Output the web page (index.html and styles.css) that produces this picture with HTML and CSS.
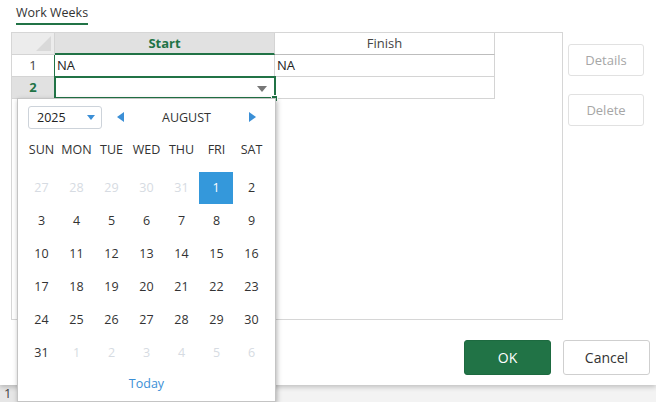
FILE: index.html
```html
<!DOCTYPE html>
<html>
<head>
    <title>Work Weeks</title>
    <meta charset="UTF-8" />
    <link rel="stylesheet" href="styles.css">
</head>
<body>
    <div class="dialog">
        <div class="tabs">
            <span class="tab active">Work Weeks</span>
        </div>
        <div class="content">
            <div class="panel">
                <div class="grid">
                    <div class="cell corner"><span class="cornerMark"></span></div>
                    <div class="cell colHead selected">Start</div>
                    <div class="cell colHead">Finish</div>

                    <div class="cell rowHead">1</div>
                    <div class="cell data startCol">NA</div>
                    <div class="cell data">NA</div>

                    <div class="cell rowHead selected">2</div>
                    <div class="cell data startCol active">
                        <span class="dropArrow"></span>
                        <span class="fillHandle"></span>
                    </div>
                    <div class="cell data"></div>
                </div>
            </div>
            <div class="side">
                <button class="sideButton" disabled>Details</button>
                <button class="sideButton" disabled>Delete</button>
            </div>
        </div>
        <div class="footer">
            <button class="button primary">OK</button>
            <button class="button">Cancel</button>
        </div>
    </div>

    <div class="sheet">
        <div class="sheetHead">1</div>
        <div class="sheetCol"></div>
        <div class="sheetCol"></div>
        <div class="sheetCol"></div>
    </div>

    <div class="calendar">
        <div class="calHeader">
            <div class="yearSelect">2025<span class="selectArrow"></span></div>
            <span class="navArrow prev"></span>
            <span class="monthName">AUGUST</span>
            <span class="navArrow next"></span>
        </div>
        <div class="weekDays">
            <span>SUN</span><span>MON</span><span>TUE</span><span>WED</span><span>THU</span><span>FRI</span><span>SAT</span>
        </div>
        <div class="days">
            <span class="other">27</span><span class="other">28</span><span class="other">29</span><span class="other">30</span><span class="other">31</span><span class="picked">1</span><span>2</span>
            <span>3</span><span>4</span><span>5</span><span>6</span><span>7</span><span>8</span><span>9</span>
            <span>10</span><span>11</span><span>12</span><span>13</span><span>14</span><span>15</span><span>16</span>
            <span>17</span><span>18</span><span>19</span><span>20</span><span>21</span><span>22</span><span>23</span>
            <span>24</span><span>25</span><span>26</span><span>27</span><span>28</span><span>29</span><span>30</span>
            <span>31</span><span class="other">1</span><span class="other">2</span><span class="other">3</span><span class="other">4</span><span class="other">5</span><span class="other">6</span>
        </div>
        <div class="today">Today</div>
    </div>
</body>
</html>
```

FILE: styles.css
```css
body
{
    margin: 0;
    font-family: "Open Sans", "Noto Sans", sans-serif;
    font-size: 13px;
    color: #333;
    background-color: #f3f3f3;
    overflow: hidden;
}

.dialog
{
    position: relative;
    z-index: 1;
    height: 385px;
    background-color: #fff;
    box-shadow: 0 2px 5px rgba(0, 0, 0, 0.22);
}

.tabs
{
    height: 32px;
    padding: 3px 0 0 16px;
    box-sizing: border-box;
}

.tab
{
    display: inline-block;
    font-size: 12.5px;
    line-height: 17px;
    padding-bottom: 2px;
    color: #333;
    border-bottom: 2px solid #217346;
}

.content
{
    display: flex;
    gap: 5px;
    padding-left: 11px;
}

.panel
{
    width: 552px;
    height: 288px;
    box-sizing: border-box;
    border: 1px solid #d6d6d6;
}

.grid
{
    display: grid;
    grid-template-columns: 43px 220px 220px;
    grid-template-rows: 22px 22px 22px;
}

.cell
{
    position: relative;
    box-sizing: border-box;
    border-right: 1px solid #d4d4d4;
    border-bottom: 1px solid #d4d4d4;
    line-height: 21px;
    white-space: nowrap;
}

.corner
{
    background-color: #ececec;
}

.cornerMark
{
    position: absolute;
    right: 3px;
    bottom: 3px;
    width: 0;
    height: 0;
    border-left: 15px solid transparent;
    border-bottom: 15px solid #d9d9d9;
}

.colHead
{
    text-align: center;
    color: #444;
    background-color: #fff;
    border-bottom-color: #bdbdbd;
}

.colHead.selected
{
    color: #217346;
    font-weight: bold;
    background-color: #e1e1e1;
    border-bottom: 2px solid #217346;
    line-height: 20px;
}

.rowHead
{
    text-align: center;
    color: #444;
}

.rowHead.selected
{
    color: #217346;
    font-weight: bold;
    background-color: #e1e1e1;
}

.data
{
    padding-left: 2px;
    color: #222;
}

.data.startCol
{
    border-left: 1px solid #217346;
    margin-left: -1px;
}

.data.active::after
{
    content: "";
    position: absolute;
    left: -1px;
    top: -1px;
    right: -2px;
    bottom: -1px;
    border: 2px solid #217346;
}

.dropArrow
{
    position: absolute;
    right: 7px;
    top: 9px;
    width: 0;
    height: 0;
    border-left: 5px solid transparent;
    border-right: 5px solid transparent;
    border-top: 6px solid #777;
}

.fillHandle
{
    position: absolute;
    z-index: 2;
    right: -4px;
    bottom: -4px;
    width: 5px;
    height: 5px;
    background-color: #217346;
    border: 1px solid #fff;
}

.side
{
    display: flex;
    flex-direction: column;
    gap: 18px;
    padding-top: 12px;
}

.sideButton
{
    width: 76px;
    height: 32px;
    font-family: inherit;
    font-size: 13px;
    color: #a6a6a6;
    background-color: #fff;
    border: 1px solid #e1e1e1;
    border-radius: 3px;
}

.footer
{
    display: flex;
    justify-content: flex-end;
    gap: 12px;
    padding: 20px 6px 0 0;
}

.button
{
    width: 87px;
    height: 35px;
    font-family: inherit;
    font-size: 14px;
    color: #333;
    background-color: #fff;
    border: 1px solid #cfcfcf;
    border-radius: 3px;
}

.button.primary
{
    color: #fff;
    background-color: #217346;
    border-color: #1d6a40;
}

.sheet
{
    display: flex;
    height: 17px;
}

.sheetHead
{
    width: 13px;
    padding-left: 4px;
    background-color: #e6e6e6;
    color: #444;
    line-height: 17px;
}

.sheetCol
{
    width: 41px;
    border-right: 1px solid #e3e3e3;
}

.sheetCol:first-of-type
{
    margin-left: 215px;
}

.calendar
{
    position: absolute;
    z-index: 3;
    left: 17px;
    top: 98px;
    width: 259px;
    height: 304px;
    box-sizing: border-box;
    background-color: #fff;
    border: 1px solid #c4c4c4;
    box-shadow: 1px 2px 5px rgba(0, 0, 0, 0.3);
}

.calHeader
{
    display: flex;
    align-items: center;
    height: 24px;
    padding: 6px 0 0 10px;
}

.yearSelect
{
    position: relative;
    width: 74px;
    height: 23px;
    box-sizing: border-box;
    padding-left: 8px;
    line-height: 21px;
    font-size: 12.5px;
    color: #222;
    border: 1px solid #cdd3da;
    border-radius: 3px;
}

.selectArrow
{
    position: absolute;
    right: 6px;
    top: 8px;
    width: 0;
    height: 0;
    border-left: 4px solid transparent;
    border-right: 4px solid transparent;
    border-top: 5px solid #3b8fd6;
}

.navArrow
{
    width: 0;
    height: 0;
    border-top: 5px solid transparent;
    border-bottom: 5px solid transparent;
}

.navArrow.prev
{
    margin-left: 15px;
    border-right: 7px solid #3b8fd6;
}

.navArrow.next
{
    border-left: 7px solid #3b8fd6;
}

.monthName
{
    width: 125px;
    text-align: center;
    font-size: 12.5px;
    color: #333;
}

.weekDays,
.days
{
    display: grid;
    grid-template-columns: repeat(7, 35px);
    padding: 0 6px;
}

.weekDays
{
    margin-top: 10px;
    height: 22px;
    line-height: 22px;
}

.weekDays > span,
.days > span
{
    text-align: center;
    font-size: 12.5px;
}

.days
{
    margin-top: 11px;
    grid-auto-rows: 33px;
}

.days > span
{
    line-height: 32px;
    color: #333;
}

.days > .other
{
    color: #d6dbe2;
}

.days > .picked
{
    margin-right: 1px;
    height: 32px;
    color: #fff;
    background-color: #3498db;
}

.today
{
    margin-top: 5px;
    text-align: center;
    font-size: 12.5px;
    color: #3b8fd6;
}
```
